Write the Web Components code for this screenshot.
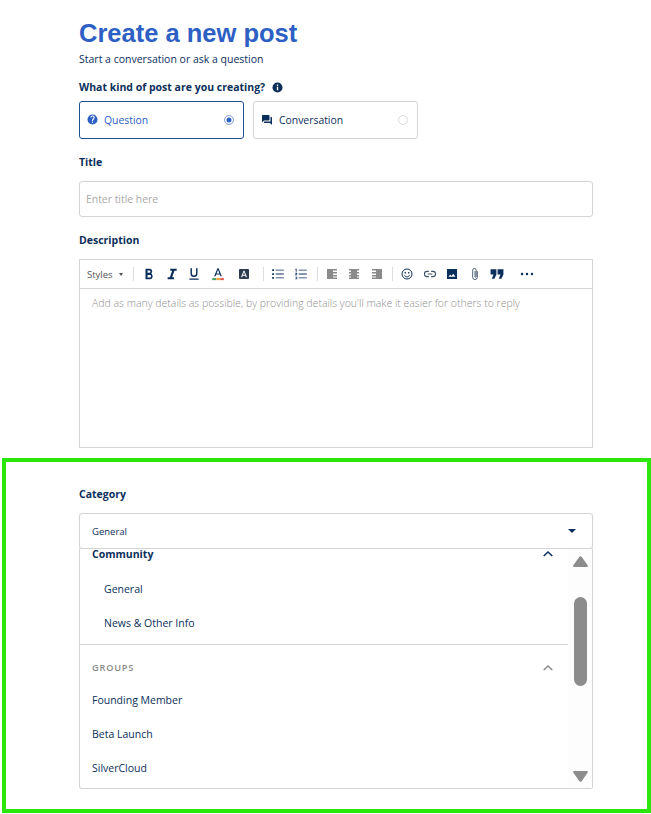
<!DOCTYPE html>
<html>
<head>
<meta charset="utf-8">
<title>Create a new post</title>
<style>
html, body { margin: 0; background: #fff; }
body { font-family: "Open Sans", sans-serif; color: #0b2f5b; }
</style>
</head>
<body>
<post-form></post-form>
<script>
const ico = {
  help: '<svg width="11" height="11" viewBox="0 0 24 24"><path fill="currentColor" d="M12 1a11 11 0 1 0 0 22 11 11 0 0 0 0-22zm1.200 18h-2.400v-2.400h2.400V19zm2.500-8.200-1.100 1.100c-.9.900-1.400 1.600-1.400 3.100h-2.400v-.6c0-1.300.5-2.500 1.400-3.400l1.500-1.500c.4-.4.7-1 .7-1.600a2.400 2.400 0 0 0-4.800 0H7.200a4.800 4.800 0 0 1 9.600 0c0 1.100-.4 2-1.100 2.900z"/></svg>',
  info: '<svg width="11" height="11" viewBox="0 0 24 24"><path fill="currentColor" d="M12 1a11 11 0 1 0 0 22 11 11 0 0 0 0-22zm1.500 17h-3v-7.500h3V18zm0-9.500h-3v-3h3v3z"/></svg>',
  forum: '<svg width="12" height="12" viewBox="0 0 24 24"><path fill="currentColor" d="M21 6h-2v9H6v2c0 .6.4 1 1 1h11l4 4V7c0-.6-.4-1-1-1zm-4 6V3c0-.6-.4-1-1-1H3c-.6 0-1 .4-1 1v14l4-4h10c.6 0 1-.4 1-1z"/></svg>',
  bold: '<svg width="14" height="14" viewBox="0 0 24 24"><path fill="currentColor" d="M15.600 10.800c1-.7 1.900-1.900 1.900-3C17.500 5.200 15.600 3 13 3H6v18h7.900c2.400 0 4.300-2.100 4.300-4.600 0-1.800-1-4.600-2.600-5.600zM9.500 6h3.200a1.900 1.900 0 0 1 0 3.800H9.500V6zm3.800 12H9.500v-4.500h3.800a2.250 2.250 0 0 1 0 4.500z"/></svg>',
  italic: '<svg width="14" height="14" viewBox="0 0 24 24"><path fill="currentColor" d="M9 3v3.500h3.200L8.300 17.500H4.500V21h11v-3.500h-3.200l3.900-11h3.800V3z"/></svg>',
  underline: '<svg width="14" height="14" viewBox="0 0 24 24"><path fill="currentColor" d="M12 17a6 6 0 0 0 6-6V2h-2.500v9a3.500 3.500 0 0 1-7 0V2H6v9a6 6 0 0 0 6 6zM4 19.500V22h16v-2.500z"/></svg>',
  color: '<svg width="14" height="14" viewBox="0 0 24 24"><path fill="currentColor" d="M11 2 5.500 16h2.300l1.100-3h6.200l1.100 3h2.300L13 2h-2zm-1.400 9L12 4.700 14.400 11H9.600z"/><rect x="2" y="19" width="7" height="3.500" fill="#4aa564"/><rect x="9" y="19" width="7" height="3.500" fill="#e8a33d"/><rect x="16" y="19" width="6" height="3.500" fill="#d9534f"/></svg>',
  bg: '<svg width="12" height="12" viewBox="0 0 24 24"><path fill="#2b3a4c" fill-rule="evenodd" d="M4 2h16a2 2 0 0 1 2 2v16a2 2 0 0 1-2 2H4a2 2 0 0 1-2-2V4a2 2 0 0 1 2-2zm7 3.500L6 18.500h2.300l1-3h5.400l1 3H18L13 5.500h-2zM10 13.500l2-5.500 2 5.500h-4z"/></svg>',
  ul: '<svg width="14" height="14" viewBox="0 0 24 24"><path fill="currentColor" d="M2 4h3v3H2zM2 10.500h3v3H2zM2 17h3v3H2zM8 4.800h14v1.400H8zM8 11.300h14v1.400H8zM8 17.800h14v1.400H8z"/></svg>',
  ol: '<svg width="14" height="14" viewBox="0 0 24 24"><path fill="currentColor" d="M8 4.800h14v1.400H8zM8 11.300h14v1.400H8zM8 17.800h14v1.400H8zM3 3h1.500v5H3V4.200H2V3zM2 10h3.500v1L3.500 13h2v1H2v-1l2-2H2zM2 16.500h3.500v4.500H2v-1h2.300v-.8H3v-.9h1.300v-.8H2z"/></svg>',
  left: '<svg width="12" height="12" viewBox="0 0 24 24"><path fill="currentColor" d="M2 2h20v3h-8v3h8v3h-8v3h8v3h-8v2h8v3H2z"/></svg>',
  center: '<svg width="12" height="12" viewBox="0 0 24 24"><path fill="currentColor" d="M2 2h20v3h-4v3h4v3h-4v3h4v3h-4v2h4v3H2v-3h4v-2H2v-3h4v-3H2V8h4V5H2z"/></svg>',
  right: '<svg width="12" height="12" viewBox="0 0 24 24"><path fill="currentColor" d="M2 2h20v20H2v-3h8v-2H2v-3h8v-3H2V8h8V5H2z"/></svg>',
  smile: '<svg width="12" height="12" viewBox="0 0 24 24"><circle cx="12" cy="12" r="10" fill="none" stroke="currentColor" stroke-width="2"/><circle cx="8.500" cy="9.500" r="1.700" fill="currentColor"/><circle cx="15.500" cy="9.500" r="1.700" fill="currentColor"/><path d="M7 14.500c1 2.200 2.900 3.300 5 3.300s4-1.100 5-3.300" fill="none" stroke="currentColor" stroke-width="2"/></svg>',
  link: '<svg width="14" height="14" viewBox="0 0 24 24"><path fill="none" stroke="#3d4f66" stroke-width="1.800" d="M10 7.500H7a4.500 4.500 0 0 0 0 9h3M14 7.500h3a4.500 4.500 0 0 1 0 9h-3M8 12h8"/></svg>',
  image: '<svg width="12" height="12" viewBox="0 0 24 24"><path fill="currentColor" fill-rule="evenodd" d="M2 2h20v20H2zm3 15.500h14l-4.500-6-3.500 4.500-2.500-3z"/></svg>',
  clip: '<svg width="14" height="14" viewBox="0 0 24 24"><path fill="none" stroke="#3d4f66" stroke-width="1.500" d="M16 7v10.500a4 4 0 0 1-8 0V5.500a3 3 0 0 1 6 0v11a1 1 0 0 1-2 0V7"/></svg>',
  quote: '<svg width="14" height="14" viewBox="0 0 24 24"><path fill="currentColor" d="M1 4h10v9l-3.500 7H3l3-7H1zM13 4h10v9l-3.500 7H15l3-7h-5z"/></svg>',
  more: '<svg width="14" height="14" viewBox="0 0 24 24"><circle cx="3.500" cy="12" r="2.100" fill="currentColor"/><circle cx="12" cy="12" r="2.100" fill="currentColor"/><circle cx="20.500" cy="12" r="2.100" fill="currentColor"/></svg>',
  up: '<svg width="12" height="12" viewBox="0 0 24 24"><path fill="none" stroke="currentColor" stroke-width="3" d="M3.500 16 12 8l8.500 8"/></svg>',
  arrowUp: '<svg width="15" height="11" viewBox="0 0 15 11"><path fill="#8c8c8c" d="M6.400.8c.6-.8 1.600-.8 2.200 0l6 8.400c.5.800.1 1.800-.9 1.800H1.300c-1 0-1.400-1-.9-1.800z"/></svg>',
  arrowDown: '<svg width="15" height="11" viewBox="0 0 15 11"><path fill="#8c8c8c" d="M6.400 10.200c.6.8 1.600.8 2.200 0l6-8.400c.5-.8.1-1.800-.9-1.800H1.300C.3 0-.1 1 .4 1.800z"/></svg>'
}

class FieldLabel extends HTMLElement {
  constructor() {
    super()
    this.attachShadow({ mode: 'open' })
    this.shadowRoot.innerHTML = `
<style>
 :host{ display: flex; align-items: center; gap: 7px; height: 16px; font: 700 10.500px/16px "Open Sans", sans-serif; color: #0b2f5b }
</style>
<slot></slot>`
  }
}

class KindOption extends HTMLElement {
  constructor() {
    super()
    this.attachShadow({ mode: 'open' })
    this.shadowRoot.innerHTML = `
<style>
 :host{ display: flex; align-items: center; box-sizing: border-box; width: 165px; height: 38px; padding: 0 9px 1px 7px; gap: 6px; border: 1px solid #d4d4d4; border-radius: 3px; font: 400 10.400px "Open Sans", sans-serif; color: #0b2f5b; background: #fff }
 :host([selected]){ border-color: #1d4f91; color: #2d5fc4; }
 .label{ flex: 1 }
 .ico{ display: flex }
 .radio{ box-sizing: border-box; width: 10px; height: 10px; border-radius: 50%; border: 1px solid #dcdcdc }
 :host([selected]) .radio{ border-color: #9db5e3; background: #2d5fc4; box-shadow: inset 0 0 0 1.5px #fff }
</style>
<span class="ico">${ico[this.getAttribute('icon')]}</span>
<span class="label"><slot></slot></span>
<span class="radio"></span>`
  }
}

class EditorToolbar extends HTMLElement {
  constructor() {
    super()
    this.attachShadow({ mode: 'open' })
    const btn = (n, ml, c) => `<span class="b" style="margin-left:${ml || 0}px${c ? ';color:' + c : ''}">${ico[n]}</span>`
    const sep = ml => `<span class="sep" style="margin-left:${ml}px"></span>`
    this.shadowRoot.innerHTML = `
<style>
 :host{ display: flex; align-items: center; height: 28px; padding-left: 7px; border-bottom: 1px solid #d4d4d4; color: #0b2f5b; font: 400 9.500px "Open Sans", sans-serif }
 .styles{ width: 46px; display: flex; align-items: center; gap: 6px; color: #555 }
 .caret{ width: 0; height: 0; border: 2px solid transparent; border-top: 3px solid #555; border-bottom: 0 }
 .sep{ width: 1px; height: 14px; background: #ddd }
 .b{ width: 22.500px; display: flex; justify-content: center; align-items: center }
</style>
<span class="styles">Styles <i class="caret"></i></span>
${sep(0)}
${btn('bold', 4)}${btn('italic')}${btn('underline')}${btn('color', 1.250)}${btn('bg', 3.500)}
${sep(8)}
${btn('ul', 2.500)}${btn('ol')}
${sep(5)}
${btn('left', 3, '#8a8a8a')}${btn('center', -1, '#8a8a8a')}${btn('right', 1, '#8a8a8a')}
${sep(4)}
${btn('smile', 2.500)}${btn('link')}${btn('image')}${btn('clip')}${btn('quote')}${btn('more', 7.500)}`
  }
}

class RichEditor extends HTMLElement {
  constructor() {
    super()
    this.attachShadow({ mode: 'open' })
    this.shadowRoot.innerHTML = `
<style>
 :host{ display: block; box-sizing: border-box; height: 189px; border: 1px solid #d4d4d4; background: #fff }
 p{ margin: 0; padding: 6px 12px; font: 300 10.500px/16px "Open Sans", sans-serif; color: #8f8f8f }
</style>
<editor-toolbar></editor-toolbar>
<p><slot></slot></p>`
  }
}

class MenuRow extends HTMLElement {
  constructor() {
    super()
    this.attachShadow({ mode: 'open' })
    this.shadowRoot.innerHTML = `
<style>
 :host{ display: flex; align-items: center; height: 34px; padding-left: 12px; font: 400 10.500px "Open Sans", sans-serif; color: #0b2f5b }
 :host([indent]){ padding-left: 24px }
</style>
<slot></slot>`
  }
}

class MenuHead extends HTMLElement {
  constructor() {
    super()
    this.attachShadow({ mode: 'open' })
    this.shadowRoot.innerHTML = `
<style>
 :host{ display: flex; align-items: center; justify-content: space-between; box-sizing: border-box; padding: 0 14px 0 12px; height: 36px; font: 700 10.500px/10px "Open Sans", sans-serif; color: #0b2f5b }
 :host([muted]){ height: 38px; padding-top: 7px; font: 600 9.200px/12px "Open Sans", sans-serif; letter-spacing: .8px; color: #8a8a8a }
 span{ display: flex }
</style>
<slot></slot><span>${ico.up}</span>`
  }
}

class CategoryMenu extends HTMLElement {
  constructor() {
    super()
    this.attachShadow({ mode: 'open' })
    this.shadowRoot.innerHTML = `
<style>
 :host{ display: flex; box-sizing: border-box; height: 240px; border: 1px solid #d4d4d4; border-top: 0; border-radius: 0 0 3px 3px; background: #fff }
 .list{ flex: 1; margin-top: -13px }
 .track{ width: 24px; background: #fdfdfd; display: flex; flex-direction: column; align-items: center; padding: 7px 0 6px; box-sizing: border-box }
 .track svg{ display: block }
 .thumb{ width: 13px; height: 89px; border-radius: 6.500px; background: #8c8c8c; margin: 30px 0 auto }
</style>
<div class="list"><slot></slot></div>
<div class="track">${ico.arrowUp}<i class="thumb"></i>${ico.arrowDown}</div>`
  }
}

class PostForm extends HTMLElement {
  constructor() {
    super()
    this.attachShadow({ mode: 'open' })
    this.shadowRoot.innerHTML = `
<style>
 :host{ display: block; position: relative; box-sizing: border-box; height: 814px; padding: 17px 58px 0 79px; font-family: "Open Sans", sans-serif; color: #0b2f5b; overflow: hidden }
 h1{ margin: 0; font: 700 25.500px/32px "Liberation Sans", Arial, sans-serif; color: #2d5fc4 }
 .sub{ margin: 2px 0 12px; font-size: 10.500px; line-height: 16px; color: #0b2f5b }
 .kinds{ display: flex; gap: 9px; margin-top: 6px }
 .info{ display: flex }
 .input{ box-sizing: border-box; height: 36px; margin-top: 11px; padding-left: 6px; border: 1px solid #d4d4d4; border-radius: 3px; display: flex; align-items: center; font-size: 10.400px; color: #a9a9a9 }
 .select{ box-sizing: border-box; height: 36px; margin-top: 11px; padding: 0 16px 0 12px; border: 1px solid #d4d4d4; border-radius: 3px; display: flex; align-items: center; justify-content: space-between; font-size: 9.500px; color: #0b2f5b; box-shadow: 0 1px 1px #ddd; background: #fff }
 .caret{ width: 0; height: 0; border: 4px solid transparent; border-top: 4px solid #0b2f5b; border-bottom: 0 }
 .frame{ position: absolute; left: 2px; top: 458px; width: 649px; height: 355px; border: 4px solid #2de60b; box-sizing: border-box; pointer-events: none }
</style>
<h1>Create a new post</h1>
<div class="sub">Start a conversation or ask a question</div>
<field-label>What kind of post are you creating? <span class="info">${ico.info}</span></field-label>
<div class="kinds">
  <kind-option icon="help" selected>Question</kind-option>
  <kind-option icon="forum">Conversation</kind-option>
</div>
<field-label style="margin-top:15px">Title</field-label>
<div class="input">Enter title here</div>
<field-label style="margin-top:15px">Description</field-label>
<rich-editor style="margin-top:11px">Add as many details as possible, by providing details you'll make it easier for others to reply</rich-editor>
<field-label style="margin-top:38px">Category</field-label>
<div class="select">General<i class="caret"></i></div>
<category-menu>
  <menu-head>Community</menu-head>
  <menu-row indent>General</menu-row>
  <menu-row indent>News &amp; Other Info</menu-row>
  <hr style="margin:4px 0 0;border:0;border-top:1px solid #d4d4d4">
  <menu-head muted>GROUPS</menu-head>
  <menu-row>Founding Member</menu-row>
  <menu-row>Beta Launch</menu-row>
  <menu-row>SilverCloud</menu-row>
</category-menu>
<div class="frame"></div>`
  }
}

customElements.define('field-label', FieldLabel)
customElements.define('kind-option', KindOption)
customElements.define('editor-toolbar', EditorToolbar)
customElements.define('rich-editor', RichEditor)
customElements.define('menu-row', MenuRow)
customElements.define('menu-head', MenuHead)
customElements.define('category-menu', CategoryMenu)
customElements.define('post-form', PostForm)
</script>
</body>
</html>
